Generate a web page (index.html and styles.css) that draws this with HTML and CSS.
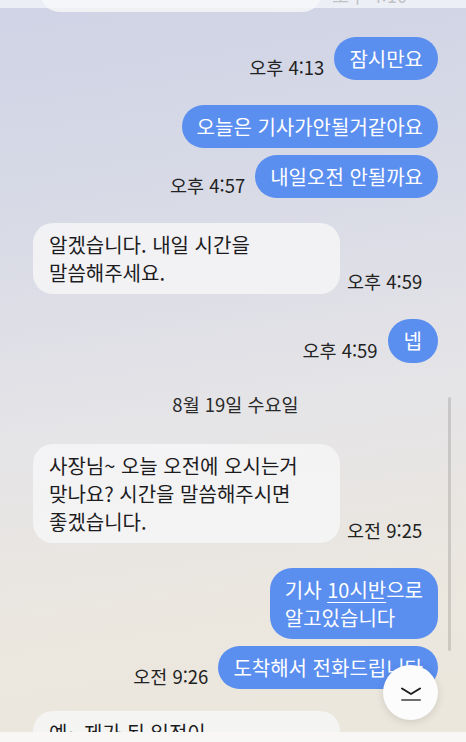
FILE: index.html
```html
<!DOCTYPE html>
<html lang="ko">
<head>
    <meta charset="UTF-8">
    <meta name="viewport" content="width=device-width, initial-scale=1.0">
    <title>대화</title>
    <link rel="stylesheet" href="styles.css">
</head>
<body>
    <div class="screen">
        <div class="chat">
            <div class="row in first">
                <div class="bubble recv cut"></div>
                <span class="time">오후 4:10</span>
            </div>

            <div class="row out group">
                <span class="time">오후 4:13</span>
                <div class="bubble sent">잠시만요</div>
            </div>

            <div class="row out group">
                <div class="bubble sent">오늘은 기사가안될거같아요</div>
            </div>
            <div class="row out">
                <span class="time">오후 4:57</span>
                <div class="bubble sent">내일오전 안될까요</div>
            </div>

            <div class="row in group">
                <div class="bubble recv">알겠습니다. 내일 시간을<br>말씀해주세요.</div>
                <span class="time">오후 4:59</span>
            </div>

            <div class="row out group">
                <span class="time">오후 4:59</span>
                <div class="bubble sent round">넵</div>
            </div>

            <div class="date">8월 19일 수요일</div>

            <div class="row in after-date">
                <div class="bubble recv">사장님~ 오늘 오전에 오시는거<br>맞나요? 시간을 말씀해주시면<br>좋겠습니다.</div>
                <span class="time">오전 9:25</span>
            </div>

            <div class="row out group">
                <div class="bubble sent">기사 <u>10시반</u>으로<br>알고있습니다</div>
            </div>
            <div class="row out">
                <span class="time">오전 9:26</span>
                <div class="bubble sent">도착해서 전화드립니다</div>
            </div>

            <div class="row in group last">
                <div class="bubble recv">예~ 제가 된 일정이<br>있어서요</div>
            </div>
        </div>

        <div class="top-bar"></div>
        <div class="bottom-bar"></div>
        <div class="scroll-thumb"></div>

        <button class="to-bottom" aria-label="맨 아래로">
            <svg width="24" height="18" viewBox="0 0 24 18">
                <path d="M3 4.5 L12 10 L21 4.5" fill="none" stroke="#1e1e1e" stroke-width="2" stroke-linecap="round" stroke-linejoin="round"/>
                <path d="M3 16 H21" stroke="#6e6e6e" stroke-width="2" stroke-linecap="round"/>
            </svg>
        </button>
    </div>
</body>
</html>
```

FILE: styles.css
```css
body {
    margin: 0;
    padding: 0;
    font-family: "Noto Sans CJK KR", "Noto Sans", sans-serif;
    color: #1c1c1e;
}
.screen {
    position: relative;
    width: 466px;
    height: 742px;
    overflow: hidden;
    background: linear-gradient(172deg, #cfd3e5 0%, #d8dae6 28%, #e5e4e7 55%, #ebe7df 80%, #ece7dc 100%);
}
.chat {
    display: flex;
    flex-direction: column;
    padding: 0 28px 0 33px;
}
.row {
    display: flex;
    align-items: flex-end;
    margin-top: 7px;
}
.row.group {
    margin-top: 25px;
}
.row.first {
    margin-top: -31px;
}
.row.first .time {
    margin-bottom: 7px;
    margin-left: 3px;
}
.row.after-date {
    margin-top: 0;
}
.row.last {
    margin-top: 22px;
}
.row.in {
    justify-content: flex-start;
    gap: 7px;
}
.row.out {
    justify-content: flex-end;
    gap: 10px;
}
.bubble {
    font-size: 20px;
    line-height: 28px;
    padding: 7.5px 15px;
    border-radius: 22px;
    white-space: nowrap;
}
.bubble.sent {
    background-color: #5a8eef;
    color: #fff;
}
.bubble.sent u {
    text-decoration-thickness: 1px;
    text-underline-offset: 4px;
}
.bubble.recv {
    background-color: rgba(246, 246, 247, 0.85);
    width: 275px;
    padding: 7.5px 16px;
    border-radius: 20px;
}
.bubble.cut {
    width: 282px;
    height: 43px;
    padding: 0;
    margin-left: 7px;
}
.bubble.round {
    padding: 8px 16px;
}
.time {
    font-size: 18.5px;
    line-height: 20px;
    margin-bottom: 3px;
    color: #222;
    white-space: nowrap;
}
.date {
    text-align: center;
    font-size: 18.5px;
    line-height: 32px;
    margin: 25px 0 24px;
    color: #2a2a2a;
}
.top-bar {
    position: absolute;
    left: 0;
    top: 0;
    width: 100%;
    height: 8px;
    background-color: rgba(246, 247, 251, 0.75);
}
.bottom-bar {
    position: absolute;
    left: 0;
    bottom: 0;
    width: 100%;
    height: 10px;
    background-color: #f8f7f5;
}
.scroll-thumb {
    position: absolute;
    left: 448px;
    top: 397px;
    width: 3px;
    height: 254px;
    border-radius: 2px;
    background-color: rgba(0, 0, 0, 0.13);
}
.to-bottom {
    position: absolute;
    left: 383px;
    top: 665px;
    width: 55px;
    height: 55px;
    border: none;
    border-radius: 50%;
    background-color: #fcfcfc;
    box-shadow: 0 2px 8px rgba(0, 0, 0, 0.12);
    display: flex;
    align-items: center;
    justify-content: center;
    padding: 0;
    cursor: pointer;
}
```
